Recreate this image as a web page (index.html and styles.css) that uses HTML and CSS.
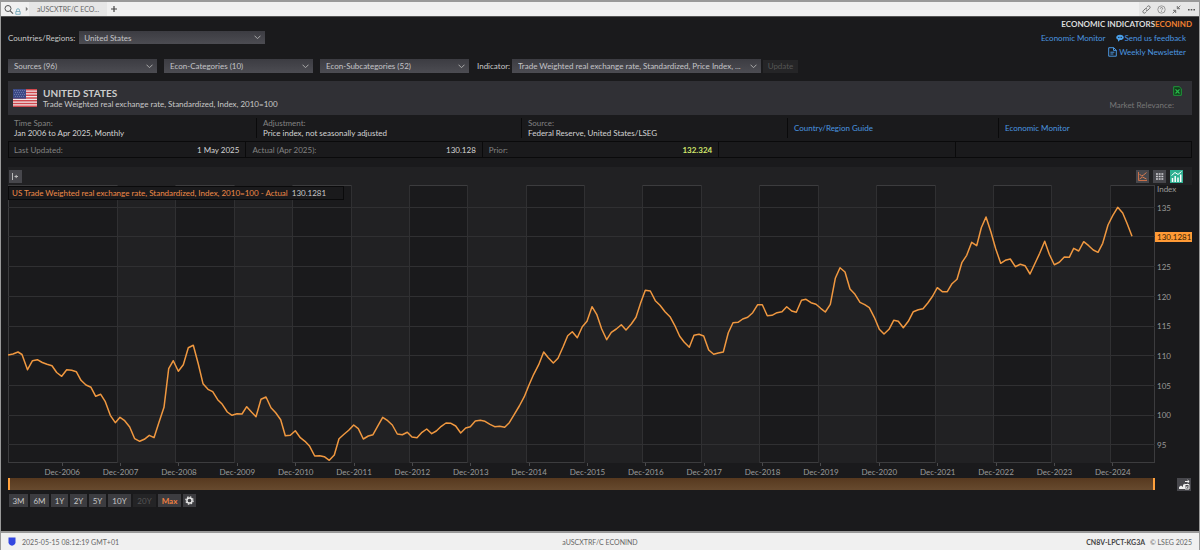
FILE: index.html
```html
<!DOCTYPE html>
<html lang="en">
<head>
  <meta charset="UTF-8">
  <meta name="viewport" content="width=device-width, initial-scale=1.0">
  <title>aUSCXTRF/C ECONIND</title>
  <link rel="stylesheet" href="styles.css">
</head>
<body>
  <header class="tabbar">
    <button class="icon-btn" aria-label="Search">
      <svg width="10" height="11" viewBox="0 0 10 11"><circle cx="4" cy="4.5" r="3" fill="none" stroke="#555"/><path d="M6.2 6.8L9 9.6" stroke="#555" stroke-width="1.2"/></svg>
    </button>
    <svg class="lock" width="6" height="7" viewBox="0 0 6 7"><path d="M1.5 3.5V2.2a1.5 1.5 0 0 1 3 0v1.3M.8 3.5h4.4v2.8H.8z" fill="none" stroke="#6aa3b8" stroke-width=".8"/></svg>
    <svg width="4" height="6" viewBox="0 0 4 6"><path d="M.8.8L3 3 .8 5.200z" fill="#777"/></svg>
    <a class="tab" href="#">aUSCXTRF/C ECO...</a>
    <button class="icon-btn add" aria-label="New tab">
      <svg width="8" height="8" viewBox="0 0 8 8"><path d="M4 1v6M1 4h6" stroke="#444" stroke-width="1.200"/></svg>
    </button>
    <div class="window-tools">
      <button class="icon-btn" aria-label="Link">
        <svg width="9" height="9" viewBox="0 0 9 9"><path d="M4.500 2.500l1.200-1.200a1.300 1.300 0 0 1 2 2L6 5a1.300 1.300 0 0 1-2 0M4.500 6.500L3.300 7.700a1.300 1.300 0 0 1-2-2L3 4a1.300 1.300 0 0 1 2 0" fill="none" stroke="#666" stroke-width=".9"/></svg>
      </button>
      <button class="icon-btn" aria-label="Help">
        <svg width="9" height="9" viewBox="0 0 9 9"><circle cx="4.500" cy="4.500" r="3.700" fill="none" stroke="#888" stroke-width=".8"/><path d="M3.400 3.600a1.100 1.100 0 1 1 1.500 1c-.3.200-.4.300-.4.700M4.500 6v.8" fill="none" stroke="#777" stroke-width=".8"/></svg>
      </button>
      <button class="icon-btn" aria-label="Shrink">
        <svg width="9" height="9" viewBox="0 0 9 9"><path d="M8.300.7L5.500 3.500M5.300 1v2.700H8M.7 8.300l2.800-2.800M1 5.300h2.700V8" fill="none" stroke="#666" stroke-width=".9"/></svg>
      </button>
      <button class="icon-btn" aria-label="More">
        <svg width="9" height="9" viewBox="0 0 9 9"><path d="M1 4h1.600v1.400H1zM3.700 4h1.600v1.400H3.700zM6.400 4H8v1.400H6.400z" fill="#555"/></svg>
      </button>
    </div>
  </header>

  <main class="app">
    <section class="top">
      <div class="country-row">
        <label for="country">Countries/Regions:</label>
        <select id="country" class="select country"><option>United States</option></select>
      </div>
      <nav class="links">
        <h1>ECONOMIC INDICATORS<span>ECONIND</span></h1>
        <div class="link-row">
          <a href="#">Economic Monitor</a>
          <a href="#" class="with-icon tight"><svg width="8" height="8" viewBox="0 0 8 8"><path d="M4 .7c2.200 0 3.800 1.200 3.800 2.700S6.200 6 4 6L2 7.700V5.700C.9 5.200.2 4.400.2 3.400.2 1.900 1.800.7 4 .7z" fill="#4aa0ea"/><path d="M2 3.400h4" stroke="#1a1a1c" stroke-width=".8" stroke-dasharray="1 .5"/></svg>Send us feedback</a>
        </div>
        <div class="link-row">
          <a href="#" class="with-icon"><svg width="9" height="10" viewBox="0 0 9 10"><path d="M.7.700h5L8.300 3.200v6H.7zM5.500.700v2.700h2.800M2.400 5.200h4M2.400 7h3" fill="none" stroke="#4a97e0"/></svg>Weekly Newsletter</a>
        </div>
      </nav>
    </section>

    <form class="filters">
      <select class="select filter" aria-label="Sources"><option>Sources (96)</option></select>
      <select class="select filter" aria-label="Categories"><option>Econ-Categories (10)</option></select>
      <select class="select filter" aria-label="Subcategories"><option>Econ-Subcategories (52)</option></select>
      <label for="indicator">Indicator:</label>
      <select id="indicator" class="select indicator"><option>Trade Weighted real exchange rate, Standardized, Price Index, ...</option></select>
      <button type="button" class="update" disabled>Update</button>
    </form>

    <section class="banner">
      <svg class="flag" width="24" height="18" viewBox="0 0 24 18">
        <path fill="#f0e6e8" d="M0 0h24v18H0z"/>
        <path d="M0 .7h24M0 3.500h24M0 6.200h24M0 9h24M0 11.800h24M0 14.500h24M0 17.300h24" stroke="#d0484e" stroke-width="1.400"/>
        <path fill="#3c4a86" d="M0 0h13v9.700H0z"/>
        <path d="M1 1.500h11M2 3.500h10M1 5.500h11M2 7.500h10" stroke="#8d97c2" stroke-width=".7" stroke-dasharray=".8 1.200"/>
      </svg>
      <div class="banner-text">
        <h2>UNITED STATES</h2>
        <p>Trade Weighted real exchange rate, Standardized, Index, 2010=100</p>
      </div>
      <div class="banner-side">
        <button class="icon-btn excel" aria-label="Export to Excel">
          <svg width="9" height="10" viewBox="0 0 9 10"><path d="M.7.700h5.500l2.100 2v6.600H.7z" fill="#123d1c" stroke="#1d9a39"/><path d="M2.500 3.300l4 4.200M6.500 3.300l-4 4.200" stroke="#29b84a" stroke-width="1.200"/></svg>
        </button>
        <span>Market Relevance:</span>
      </div>
    </section>

    <dl class="meta">
      <div><dt>Time Span:</dt><dd>Jan 2006 to Apr 2025, Monthly</dd></div>
      <div><dt>Adjustment:</dt><dd>Price index, not seasonally adjusted</dd></div>
      <div><dt>Source:</dt><dd>Federal Reserve, United States/LSEG</dd></div>
      <div><dd><a href="#">Country/Region Guide</a></dd></div>
      <div><dd><a href="#">Economic Monitor</a></dd></div>
    </dl>

    <dl class="values">
      <div><dt>Last Updated:</dt><dd>1 May 2025</dd></div>
      <div><dt>Actual (Apr 2025):</dt><dd>130.128</dd></div>
      <div><dt>Prior:</dt><dd class="prior">132.324</dd></div>
      <div></div>
      <div></div>
    </dl>

    <div class="chart-tools">
      <button class="tool expand" aria-label="Show panel">
        <svg width="13" height="13" viewBox="0 0 13 13"><path d="M3.500 3v7M5.500 6.500H9M7.200 4.900v3.200" stroke="#bbb" fill="none"/></svg>
      </button>
      <button class="tool" aria-label="Line chart">
        <svg width="13" height="13" viewBox="0 0 13 13"><path d="M2.500 2v8.500H11" fill="none" stroke="#c8704a"/><path d="M3.500 4l2 2 2-1 3-2.500M3.500 9l3-2 4 2" fill="none" stroke="#d77b50"/></svg>
      </button>
      <button class="tool" aria-label="Table">
        <svg width="13" height="13" viewBox="0 0 13 13"><path d="M3 4h7.500M3 6.500h7.500M3 9h7.500" stroke="#d0d0d4" stroke-width="1.400" stroke-dasharray="1.900 .8"/></svg>
      </button>
      <button class="tool active" aria-label="Chart and table">
        <svg width="13" height="13" viewBox="0 0 13 13"><path d="M2.500 12V8M5.200 12V6M8 12V7.500M10.700 12V4.500" stroke="#fff" stroke-width="1.500"/><path d="M1.500 5.500l3.500-3 3 2 3.500-3" fill="none" stroke="#fff"/></svg>
      </button>
    </div>

    <section class="chart">
      <div class="plot">
        <svg viewBox="8 185 1147 278" preserveAspectRatio="none" role="img" aria-label="US trade weighted real exchange rate">
          <g fill="#212123">
            <path d="M117 185h59v278h-59zM234 185h59v278h-59zM351 185h58v278h-58zM468 185h58v278h-58zM585 185h58v278h-58zM701 185h59v278h-59zM818 185h59v278h-59zM935 185h59v278h-59zM1052 185h59v278h-59z"/>
          </g>
          <g class="grid-lines">
            <path d="M8 207.500h1147M8 236.500h1147M8 266.500h1147M8 296.500h1147M8 326.500h1147M8 355.500h1147M8 385.500h1147M8 415.500h1147M8 444.500h1147"/>
            <path d="M117.500 185v278M175.500 185v278M234.500 185v278M292.500 185v278M351.500 185v278M409.500 185v278M467.500 185v278M526.500 185v278M584.500 185v278M642.500 185v278M701.500 185v278M759.500 185v278M818.500 185v278M876.500 185v278M935.500 185v278M993.500 185v278M1051.500 185v278M1110.500 185v278"/>
          </g>
          <polyline class="series" points="8,355 13,354 18,352 22,354.5 27.5,369.7 32.5,360.7 37.3,359.7 42.3,362.5 47,364.3 52,365.7 56.7,372.5 61.7,376.3 66.7,369.7 71.7,370.3 76.3,371.7 81,380.3 86,385 91,387.3 95.7,396.3 100.7,394.3 105.3,401.7 110.3,415.3 115.3,422.7 120,417.3 124.7,420.7 129.7,427 134.7,438.7 139.7,441.3 144.3,439.3 149.3,435.3 154,437.7 159,422.3 164,407.3 168.7,368.7 173.3,360.7 178.3,371.3 183.3,364.7 188.3,347.7 193.3,345.3 198.3,364 203,383.7 208,389.3 212.7,391.7 217.7,399.7 222.3,404.3 227.3,412 232,415.3 237,413.7 242,414 246.7,406.7 251.7,412.3 256,416.7 261,399.3 266,397 271,407.7 275.7,412.7 280.7,419.7 285.3,435.7 290.3,435.3 295.3,430.7 300.3,437.7 305,441.3 309.7,446.3 314.7,456 319.7,455.7 324.3,456.7 329.3,460.3 334.3,455 339,438.7 344,434.3 348.7,430.3 353.7,425 358.3,428.7 363.3,439 368.3,436 373,434.7 378,425.7 382.7,417.3 387.7,420.7 392.3,425 397.3,434 402.3,434.7 407.3,432.3 412,437 417,437.7 422,432.3 426.7,429 431.7,433.7 436.3,431 441.3,426.3 446,423 451,423.3 455.7,426 460.7,433 465.7,428 470.3,426.7 475.3,421 480.3,420.3 485,421.3 490,424.3 494.7,426.7 499.7,426.3 504.7,427.3 509.3,422.7 514.3,414.3 519.3,406 524.3,396.7 529,385 533.7,374.3 538.7,364.7 543.7,352 548.3,357.7 553.3,363 558,358.3 563,347 567.7,335.7 572.3,331.7 577.3,337.7 582.3,326.7 587,321.3 592,306.7 596.7,314.3 601.7,329 606.7,339.7 611.3,332.3 616.3,329 621.3,324.7 626,330 631.3,324 636,317.3 640.7,302.7 645.3,290.3 650.3,291 655.3,300.7 660,305.3 665,311.7 670,316.7 674.7,325.3 679.7,336.3 684.3,342.3 689.3,347.3 694,335.3 699,334.3 703.7,336 708.7,350 713.7,354.3 718.3,353 723.3,352 728.3,332.7 733,322.7 738,322.3 742.7,319 747.7,317.3 752.7,312.7 757.7,304.7 762.3,304.7 767.3,315.7 772,315.3 777,312.7 782,311.7 786.7,306.7 791.7,311 796.3,312.3 801.5,300.3 806,299.3 811,302.7 816,304.3 820.7,308.3 825.3,312 830.3,304.3 835.3,278.3 840,267.7 845,272 850,289 855,294.3 860,302.3 864.7,304.7 869.3,307.7 874.3,317.3 879.3,329.3 884,334 889,329.3 893.7,320.3 898.3,321.3 903.3,327.7 908.3,321.3 913.3,311.7 918.3,309.7 923,308.7 928,302.7 932.7,296 937.3,287.7 942.3,291.7 947.3,291.7 952,283.7 957,279.3 962,262.3 966.7,255.3 971.7,242.3 976.7,245.7 981.3,227.7 986,217 991,232.3 995.7,248.7 1000.7,263.3 1005.3,260.3 1010.3,259 1015.3,266.7 1020.3,264.3 1025,265.7 1030,274 1034.7,264 1039.7,253.3 1044.7,241.3 1049.3,254.3 1054.3,264.7 1059.3,262.3 1064.3,257 1069.3,257.3 1073.7,248.3 1078.7,251 1083.7,241.7 1088.7,245.7 1093.3,250 1098,252.3 1102.7,243.3 1108,225 1112.7,215.7 1117.7,207.3 1122.7,213 1127.3,224 1132,236.3"/>
        </svg>
        <p class="legend">US Trade Weighted real exchange rate, Standardized, Index, 2010=100 - Actual <span>130.1281</span></p>
      </div>
      <div class="y-axis">
        <span class="unit">Index</span>
        <span>135</span>
        <span class="current">130.1281</span>
        <span>125</span>
        <span>120</span>
        <span>115</span>
        <span>110</span>
        <span>105</span>
        <span>100</span>
        <span>95</span>
      </div>
      <div class="x-axis">
        <span>Dec-2006</span><span>Dec-2007</span><span>Dec-2008</span><span>Dec-2009</span><span>Dec-2010</span><span>Dec-2011</span><span>Dec-2012</span><span>Dec-2013</span><span>Dec-2014</span><span>Dec-2015</span><span>Dec-2016</span><span>Dec-2017</span><span>Dec-2018</span><span>Dec-2019</span><span>Dec-2020</span><span>Dec-2021</span><span>Dec-2022</span><span>Dec-2023</span><span>Dec-2024</span>
      </div>
      <div class="range-bar"></div>
      <button class="tool export" aria-label="Export image">
        <svg width="14" height="13" viewBox="0 0 14 13"><path d="M2 11V9l2-1.500L6 9V7l1.500-1.500L8 7v4z" fill="#eee"/><path d="M8 11V6.500h4V11zM8 3.500h4M10.500 2l1.700 1.500L10.500 5" fill="none" stroke="#eee"/><path d="M9 10l1-1.500 1 1" stroke="#eee" fill="none"/></svg>
      </button>
    </section>

    <div class="ranges">
      <button class="month">3M</button>
      <button class="month">6M</button>
      <button>1Y</button>
      <button>2Y</button>
      <button>5Y</button>
      <button class="wide">10Y</button>
      <button class="wide" disabled>20Y</button>
      <button class="wide selected">Max</button>
      <button class="tool gear" aria-label="Settings">
        <svg width="13" height="13" viewBox="0 0 13 13"><circle cx="6.500" cy="6.500" r="2.600" fill="none" stroke="#e4e4e4" stroke-width="1.500"/><circle cx="6.500" cy="6.500" r="3.700" fill="none" stroke="#e4e4e4" stroke-width="1.200" stroke-dasharray="1.500 1.400"/></svg>
      </button>
    </div>
  </main>

  <footer class="statusbar">
    <span class="clock">
      <svg width="8" height="9" viewBox="0 0 8 9"><path d="M.5.500h7v4.700C7.500 7.200 6 8.200 4 8.800 2 8.200.5 7.200.5 5.200z" fill="#3347e0"/></svg>
      2025-05-15 08:12:19 GMT+01
    </span>
    <span>aUSCXTRF/C ECONIND</span>
    <span class="copy"><b>CN8V-LPCT-KG3A</b> © LSEG 2025</span>
  </footer>
</body>
</html>
```

FILE: styles.css
```css
* {
  margin: 0;
  padding: 0;
  box-sizing: border-box;
}

body {
  min-height: 100vh;
  display: flex;
  flex-direction: column;
  font-family: Lato, "Open Sans", sans-serif;
  font-size: 8px;
  line-height: 10px;
  color: #c8c8c8;
  background: #1a1a1c;
  border: 1px solid #999;
  border-width: 2px 1px 0;
}

svg {
  display: block;
  flex: none;
}

a {
  color: #4a97e0;
  text-decoration: none;
}

button,
select {
  font: inherit;
  color: inherit;
  border: none;
}

.icon-btn {
  display: flex;
  background: none;
}

/* tab bar */
.tabbar {
  display: flex;
  align-items: center;
  height: 15px;
  padding-left: 3px;
  font-size: 7px;
  background: #f0f0f0;
  border-bottom: 1px solid #555;
}

.lock {
  margin: 4px 4px 0 1px;
}

.tab {
  align-self: stretch;
  padding: 2px 8px 0;
  color: #666;
  background: #e6e6e6;
}

.add {
  margin-left: 3px;
}

.window-tools {
  display: flex;
  align-items: center;
  align-self: stretch;
  gap: 6px;
  margin-left: auto;
  padding: 0 3px;
  background: #e6e6e6;
}

/* page header */
.app {
  flex: 1;
  display: flex;
  flex-direction: column;
  padding: 0 7px 24px;
}

.top {
  display: flex;
  justify-content: space-between;
}

.country-row {
  display: flex;
  align-items: center;
  gap: 4px;
  height: 13px;
  margin-top: 14px;
}

.links {
  display: flex;
  flex-direction: column;
  align-items: flex-end;
  gap: 4px;
  padding-top: 2px;
}

.links h1 {
  font-size: 8px;
  line-height: 10px;
  color: #ddd;
}

.links h1 span {
  color: #f08030;
}

.link-row {
  display: flex;
  gap: 10px;
  padding-right: 6px;
}

.with-icon {
  display: flex;
  align-items: center;
  gap: 2px;
}

.tight {
  gap: 1px;
}

.select {
  appearance: none;
  height: 14px;
  padding: 0 16px 0 6px;
  color: #c4c4c8;
  background: url("data:image/svg+xml,%3Csvg xmlns='http://www.w3.org/2000/svg' width='7' height='5'%3E%3Cpath d='M.5 .7l3 3 3-3' fill='none' stroke='%23aaa'/%3E%3C/svg%3E") no-repeat right 4px center, linear-gradient(#3c3c42, #4c4c52);
}

.country {
  width: 186px;
  height: 13px;
  padding-left: 5px;
}

.filters {
  display: flex;
  align-items: center;
  gap: 7px;
  margin: 2px 0 8px;
}

.filter {
  width: 149px;
}

.filters label {
  margin-left: 1px;
  width: 28px;
  white-space: nowrap;
}

.indicator {
  width: 249px;
}

.update {
  width: 35px;
  height: 13px;
  margin-left: -5px;
  color: #555;
  background: #252527;
}

/* country banner */
.banner {
  display: flex;
  align-items: center;
  gap: 6px;
  height: 34px;
  padding: 0 18px 0 5px;
  background: #303035;
}

.banner h2 {
  font-size: 10px;
  line-height: 12px;
  color: #ccc;
}

.banner-side {
  display: flex;
  flex-direction: column;
  align-items: flex-end;
  gap: 4px;
  margin-left: auto;
  color: #777;
}

.excel {
  margin-right: -8px;
}

.meta {
  display: grid;
  grid-template-columns: 248fr 265fr 266fr 211fr 194fr;
  height: 26px;
  padding: 3px 0;
}

.meta div {
  display: flex;
  flex-direction: column;
  justify-content: center;
  padding-left: 6px;
  border-left: 1px solid #0a0a0b;
}

.meta div:first-child {
  border: none;
}

dt {
  color: #828282;
}

dd {
  color: #d4d4d4;
}

.values {
  display: grid;
  grid-template-columns: repeat(5, 1fr);
  height: 17px;
  margin-bottom: 9px;
  border: 1px solid #0a0a0b;
}

.values div {
  display: flex;
  align-items: center;
  justify-content: space-between;
  padding: 0 6px;
  border-left: 1px solid #0a0a0b;
}

.values div:first-child {
  padding-left: 5px;
  border: none;
}

.values .prior {
  font-weight: bold;
  color: #d3e86c;
}

/* chart */
.chart-tools {
  display: flex;
  align-items: center;
  gap: 4px;
  height: 18px;
  padding: 0 9px 0 1px;
  background: #212123;
}

.tool {
  display: flex;
  justify-content: center;
  align-items: center;
  height: 13px;
  background: #47474c;
}

.expand {
  margin-right: auto;
}

.active {
  background: #2fb092;
}

.chart {
  flex: 1;
  display: grid;
  grid-template-columns: 1fr 37px;
  grid-template-rows: 1fr 15px 12px;
}

.plot {
  position: relative;
  outline: 1px solid #3c3c3e;
  outline-offset: -1px;
}

.plot svg {
  position: absolute;
  width: 100%;
  height: 100%;
}

.grid-lines {
  fill: none;
  stroke: #303032;
}

.series {
  fill: none;
  stroke: #f09840;
  stroke-width: 1.5;
  stroke-linejoin: round;
}

.legend {
  position: absolute;
  top: 1px;
  left: 0;
  width: 336px;
  height: 14px;
  padding: 1px 3px;
  white-space: nowrap;
  color: #f08a48;
  background: #1a1a1c;
  border: 1px solid #0a0a0b;
}

.legend span {
  margin-left: 2px;
  color: #c8c8c8;
}

.y-axis {
  display: grid;
  grid-template-rows: 8px repeat(9, 1fr);
  align-items: center;
  padding-bottom: 3px;
  color: #9a9a9a;
}

.y-axis span {
  padding-left: 2px;
}

.y-axis .current {
  color: #3a1f00;
  background: #ff9a36;
}

.x-axis {
  display: grid;
  grid-template-columns: repeat(19, 1fr);
  grid-column: 1 / 3;
  padding: 0 50px 0 25px;
  text-align: center;
  color: #9a9a9a;
}

.x-axis span::before {
  content: "";
  display: block;
  width: 1px;
  height: 3px;
  margin: 0 auto 1px;
  background: #4a4a4c;
}

.range-bar {
  background: linear-gradient(#57391f, #674a2e);
  border: 2px solid #ffa03c;
  border-width: 0 2px;
}

.export {
  margin-left: 22px;
  width: 14px;
}

.ranges {
  display: flex;
  gap: 2px;
  margin: 4px 0 0 1px;
}

.ranges button {
  width: 17px;
  height: 13px;
  background: #3c3c40;
}

.ranges .month {
  width: 19px;
}

.ranges .wide {
  width: 23px;
}

.ranges button:disabled {
  color: #555;
  background: #242426;
}

.ranges .selected {
  font-weight: bold;
  color: #f08040;
}

.ranges .gear {
  width: 13px;
}

/* status bar */
.statusbar {
  display: grid;
  grid-template-columns: 1fr auto 1fr;
  align-items: center;
  height: 19px;
  padding: 0 7px;
  font-size: 7px;
  color: #666;
  background: #f0f0f0;
  border-top: 2px solid #999;
}

.clock {
  display: flex;
  align-items: center;
  gap: 6px;
}

.copy {
  text-align: right;
}

.copy b {
  margin-right: 3px;
  color: #444;
}
```
